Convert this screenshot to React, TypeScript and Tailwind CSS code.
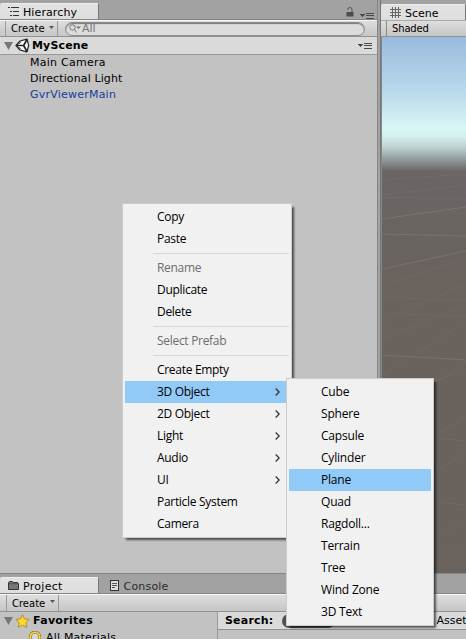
import React from "react";

const ui = "font-['DejaVu_Sans',sans-serif]";

function Caret({ className = "" }: { className?: string }) {
  return (
    <svg className={className} width="5" height="3" viewBox="0 0 5 3">
      <path d="M0 0h5L2.5 3z" fill="#555" />
    </svg>
  );
}

function PanelMenu() {
  return (
    <svg width="14" height="6" viewBox="0 0 14 6" shapeRendering="crispEdges">
      <path d="M0 1h5L2.5 4z" fill="#4a4a4a" />
      <path d="M6 .5h8M6 2.9h8M6 5.5h8" stroke="#4a4a4a" />
    </svg>
  );
}

function Fold() {
  return (
    <svg width="9" height="8" viewBox="0 0 9 8">
      <path d="M0 0h9L4.5 8z" fill="#777" />
    </svg>
  );
}

function UnityLogo() {
  return (
    <svg width="15" height="15" viewBox="0 0 15 15">
      <path d="M1 7.5 5 3 12 1.2 13.7 7.5 12 13.8 5 12z" fill="#fff" stroke="#222" strokeWidth="1.2" strokeLinejoin="round" />
      <path d="M12 1.5 8.6 7.5 12 13.5M1.5 7.5h7" fill="none" stroke="#222" strokeWidth="1.7" />
      <path d="M3.6 6.4 6 3.7M3.6 8.8 6 11.3" fill="none" stroke="#222" strokeWidth=".8" />
    </svg>
  );
}

type Entry = { label: string; off?: boolean; sub?: boolean; on?: boolean } | null;

const sceneMenu: Entry[] = [
  { label: "Copy" },
  { label: "Paste" },
  null,
  { label: "Rename", off: true },
  { label: "Duplicate" },
  { label: "Delete" },
  null,
  { label: "Select Prefab", off: true },
  null,
  { label: "Create Empty" },
  { label: "3D Object", sub: true, on: true },
  { label: "2D Object", sub: true },
  { label: "Light", sub: true },
  { label: "Audio", sub: true },
  { label: "UI", sub: true },
  { label: "Particle System" },
  { label: "Camera" },
];

const objectMenu: Entry[] = [
  { label: "Cube" },
  { label: "Sphere" },
  { label: "Capsule" },
  { label: "Cylinder" },
  { label: "Plane", on: true },
  { label: "Quad" },
  { label: "Ragdoll..." },
  { label: "Terrain" },
  { label: "Tree" },
  { label: "Wind Zone" },
  { label: "3D Text" },
];

function Menu({ items, className }: { items: Entry[]; className: string }) {
  return (
    <div
      className={`absolute border border-[#ccc] bg-[#f1f1f1] p-[2px] font-['Open_Sans','Noto_Sans',sans-serif] text-[12px] shadow-[3px_3px_2px_-1px_rgba(0,0,0,0.6)] ${className}`}
    >
      {items.map((item, i) =>
        item ? (
          <div
            key={i}
            className={`flex h-[22px] items-center justify-between pl-8 pr-[9px] leading-[22px] whitespace-nowrap ${item.on ? "bg-[#91c9f7]" : ""} ${item.off ? "text-[#6d6d6d]" : "text-black"}`}
          >
            <span>{item.label}</span>
            {item.sub && (
              <svg width="5" height="8" viewBox="0 0 5 8">
                <path d="M.7.5 4.2 4 .7 7.5" fill="none" stroke="#333" strokeWidth="1.3" />
              </svg>
            )}
          </div>
        ) : (
          <div key={i} className="flex h-[7px] items-center pl-7">
            <div className="h-px w-full bg-[#d7d7d7]" />
          </div>
        ),
      )}
    </div>
  );
}

const tab = "flex items-center rounded-t-[2px] border-t border-r border-t-[#eee] border-r-[#777] bg-linear-to-b from-[#e2e2e2] to-[#dedede]";
const bar = "flex items-center border-b border-[#929292] bg-linear-to-b from-[#dedede] to-[#c6c6c6]";

function Hierarchy() {
  return (
    <section className="flex w-[378px] flex-col border-r border-[#858585] bg-[#c2c2c2]">
      <div className="flex h-5 items-end justify-between border-b border-[#858585] bg-[#a2a2a2] pr-[3px]">
        <div className={`${tab} h-4 w-[98.5px] pl-2`}>
          <svg width="11" height="9" viewBox="0 0 11 9" shapeRendering="crispEdges">
            <path d="M0 .5h2M3 .5h8M2 4.5h2M5 4.5h6M2 8.5h2M5 8.5h6" stroke="#333" />
          </svg>
          <span className="ml-1 pt-[3px] text-[11px] tracking-[0.1px]">Hierarchy</span>
        </div>
        <div className="flex items-end">
          <svg className="mr-[6px] mb-[2px]" width="8" height="10" viewBox="0 0 8 10">
            <path d="M1.7 3V2.6a2 2 0 0 1 4.3 0V5" fill="none" stroke="#555" />
            <path d="M.5 5h7v4.5h-7z" fill="#4d4d4d" />
          </svg>
          <PanelMenu />
        </div>
      </div>
      <div className={`${bar} h-[17px] border-t border-t-[#f5f5f5] pl-[5px]`}>
        <div className="flex h-full w-[53px] items-center border-x border-[#999] pl-[5px] text-[10px]">
          <span className="tracking-[0.1px]">Create</span>
          <Caret className="ml-[4px] mb-[3px]" />
        </div>
        <div className="ml-[7px] flex h-[14px] w-[300px] items-center rounded-full border border-[#8d8d8d] bg-[#dcdcdc] pl-[3px] text-[#777] shadow-[inset_0_1px_1px_#777]">
          <svg width="12" height="9" viewBox="0 0 12 9">
            <circle cx="3.5" cy="3.5" r="2.7" fill="none" stroke="#777" />
            <path d="m5.5 5.5 2 3" stroke="#777" />
            <path d="M7 2.5h5L9.5 5z" fill="#777" />
          </svg>
          <span className="ml-px text-[11px] leading-[13px]">All</span>
        </div>
      </div>
      <div className="flex h-[18px] items-center border-b border-[#999] bg-[#dadada] pr-[5px] pl-1">
        <Fold />
        <span className="ml-[2px]"><UnityLogo /></span>
        <b className="ml-[2px] pt-[2px] text-[11px] tracking-[0.15px]">MyScene</b>
        <span className="ml-auto"><PanelMenu /></span>
      </div>
      <div className="flex flex-col pl-[30px] text-[11px] leading-4">
        <span className="tracking-[0.26px]">Main Camera</span>
        <span className="tracking-[0.12px]">Directional Light</span>
        <span className="tracking-[0.22px] text-[#143c9c]">GvrViewerMain</span>
      </div>
    </section>
  );
}

function SceneView() {
  return (
    <section className="ml-[2px] flex w-[86px] flex-col border-l border-[#777]">
      <div className="flex h-5 items-end bg-[#a2a2a2]">
        <div className={`${tab} h-4 w-full pl-[9px]`}>
          <svg width="11" height="11" viewBox="0 0 11 11" shapeRendering="crispEdges">
            <path d="M2.5 0v11M5.5 0v11M8.5 0v11M0 2.5h11M0 5.5h11M0 8.5h11" stroke="#666" />
          </svg>
          <span className="ml-1 pt-[3px] text-[11px]">Scene</span>
        </div>
      </div>
      <div className={`${bar} h-[17px] border-t border-t-[#aaa] pl-[5px]`}>
        <span className="flex h-full items-center border-l border-[#888] pl-[5px] text-[10px] tracking-[-0.15px]">Shaded</span>
      </div>
      <svg className="w-full grow border-l border-[#858585]" viewBox="0 0 85 536" preserveAspectRatio="none">
        <defs>
          <linearGradient id="sky" x1="0" y1="0" x2="0" y2="536" gradientUnits="userSpaceOnUse">
            <stop offset="0" stopColor="#9abadd" />
            <stop offset=".099" stopColor="#b8d8eb" />
            <stop offset=".145" stopColor="#cdebf2" />
            <stop offset=".17" stopColor="#d8f6f6" />
            <stop offset=".187" stopColor="#d2eeee" />
            <stop offset=".208" stopColor="#bacccc" />
            <stop offset=".232" stopColor="#8b9393" />
            <stop offset=".25" stopColor="#6b6666" />
            <stop offset=".45" stopColor="#69625d" />
            <stop offset="1" stopColor="#6a625c" />
          </linearGradient>
        </defs>
        <path d="M0 0h85v536H0z" fill="url(#sky)" />
        <g fill="none" stroke="#9a9a92" strokeWidth=".8">
          <path opacity=".4" d="M0 182 85 170M0 197l85 2M0 232 85 214" />
          <path opacity=".16" d="M0 143l85-6M0 158l85-10M0 160l85 2M0 248l85-26M0 285l85-38M0 302l85-34M0 260l85 4M0 339l85-55M0 377l85-51M0 276l85 4M0 430l85-50M0 470l85-55M0 536l85-55M0 396l85 8M0 460l85 8M40 350l45-18" />
          <path opacity=".4" d="m0 318 85 5" />
        </g>
      </svg>
    </section>
  );
}

function Project() {
  return (
    <section className="flex h-[66px] flex-col bg-[#c2c2c2]">
      <div className="flex h-[21px] shrink-0 items-end border-t border-b border-t-[#858585] border-b-[#858585] bg-[#a2a2a2]">
        <div className={`${tab} h-4 w-[98.5px] pl-2`}>
          <svg width="11" height="9" viewBox="0 0 11 9">
            <path d="M.5 1.5 1.5.5h3l1 1h4l1 1v6H.5z" fill="#777" stroke="#333" />
            <path d="M1 2.7h9" stroke="#444" strokeWidth=".7" />
          </svg>
          <span className="ml-1 pt-[4px] text-[11px] tracking-[0.3px]">Project</span>
        </div>
        <div className="ml-[11px] flex h-4 items-center text-[#2b2b2b]">
          <svg width="9" height="11" viewBox="0 0 9 11" shapeRendering="crispEdges">
            <path d="M.5.5h8v10h-8z" fill="#ddd" stroke="#333" />
            <path d="M2 3.5h5M2 5.5h5M2 7.5h3" stroke="#555" />
          </svg>
          <span className="ml-[5px] pt-[4px] text-[11px] tracking-[0.2px]">Console</span>
        </div>
      </div>
      <div className={`${bar} h-[18px] shrink-0 border-t border-t-[#f5f5f5] pl-[6px]`}>
        <div className="flex h-full w-[53px] items-center border-x border-[#999] pl-[5px] text-[10px]">
          Create
          <Caret className="ml-[5px] mb-[3px]" />
        </div>
      </div>
      <div className="flex h-[27px] overflow-hidden">
        <div className="w-[218px] border-r border-[#999] pl-1">
          <div className="flex h-[18px] items-center">
            <Fold />
            <svg className="ml-[2px]" width="15" height="14" viewBox="0 0 15 14">
              <path d="m7.5.8 2 4.1 4.6.6-3.3 3.2.8 4.6-4.1-2.2-4.1 2.2.8-4.6L.9 5.5l4.6-.6z" fill="#ffda28" stroke="#a98318" strokeWidth=".8" />
            </svg>
            <b className="ml-[3px] pt-px text-[11px] tracking-[0.3px]">Favorites</b>
          </div>
          <div className="flex h-4 items-center pl-6">
            <svg width="14" height="14" viewBox="0 0 14 14">
              <circle cx="7" cy="6" r="4.7" fill="#d6d6d6" stroke="#937622" strokeWidth="3" />
              <circle cx="7" cy="6" r="4.7" fill="none" stroke="#f1d052" strokeWidth="1.8" />
            </svg>
            <span className="ml-1 text-[11px] tracking-[0.2px]">All Materials</span>
          </div>
        </div>
        <div className="flex h-[18px] w-[248px] shrink-0 items-center border-b border-[#929292] bg-[#dadada] pl-[7px] text-[11px]">
          <b className="w-[49px] pt-px tracking-[0.2px]">Search:</b>
          <div className="ml-[9px] h-[14px] w-[53px] shrink-0 rounded-full bg-[#505050]" />
          <span className="ml-[101px] pt-px">Asset</span>
        </div>
      </div>
    </section>
  );
}

export default function App() {
  return (
    <main className={`relative flex h-[639px] w-[466px] flex-col overflow-hidden bg-[#a2a2a2] text-black ${ui}`}>
      <div className="flex h-[573px]">
        <Hierarchy />
        <SceneView />
      </div>
      <Project />
      <Menu items={sceneMenu} className="top-[203px] left-[122px] w-[170px] tracking-[-0.3px]" />
      <Menu items={objectMenu} className="top-[378px] left-[286px] w-[148px] tracking-[-0.2px]" />
    </main>
  );
}
